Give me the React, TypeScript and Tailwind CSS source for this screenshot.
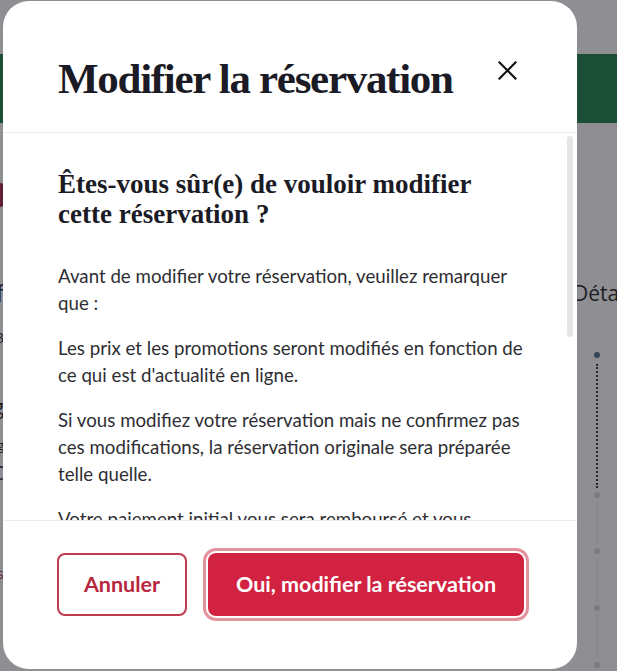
import { useState } from 'react';

const paragraphs = [
  'Avant de modifier votre réservation, veuillez remarquer que :',
  "Les prix et les promotions seront modifiés en fonction de ce qui est d'actualité en ligne.",
  'Si vous modifiez votre réservation mais ne confirmez pas ces modifications, la réservation originale sera préparée telle quelle.',
  'Votre paiement initial vous sera remboursé et vous recevrez une nouvelle facture.',
];

const CloseIcon = () => (
  <svg width="19" height="19" viewBox="0 0 19 19" fill="none" stroke="#111" strokeWidth="2.2" strokeLinecap="square">
    <path d="M1.5 1.5 17.5 17.5" />
    <path d="M17.5 1.5 1.5 17.5" />
  </svg>
);

// page visible behind the overlay
const BackgroundPage = () => (
  <div className="pt-[54px]">
    <div className="h-[69px] bg-[#1a7d45]" />
    <div className="flex">
      {/* bord gauche de la page, presque entièrement caché */}
      <div className="flex w-[4px] shrink-0 flex-col items-end pt-[60px] font-['Open_Sans',sans-serif] text-[#1c1c22]">
        <span className="h-[24px] w-[20px] rounded-[4px] bg-[#a5203c]" />
        <span className="mt-[76px] whitespace-nowrap text-[24px] leading-[20px]">Modif</span>
        <span className="mt-[27px] whitespace-nowrap text-[15px] leading-[14px]">1 2 3</span>
        <span className="mt-[53px] whitespace-nowrap text-[20px] leading-[20px]">Voyag</span>
        <span className="mt-[23px] whitespace-nowrap text-[13px] leading-[10px]">Bg</span>
        <span className="mt-[13px] whitespace-nowrap text-[20px] leading-[20px]">ABC</span>
        <span className="mt-[84px] whitespace-nowrap text-[15px] leading-[13px] text-[#a5203c]">Plus</span>
      </div>
      <div className="ml-[569px] pt-[160px]">
        <h2 className="whitespace-nowrap font-['Open_Sans',sans-serif] text-[21px] leading-[20px] text-[#1c1c22]">Détails</h2>
        <div className="ml-[21px] mt-[49px] flex w-[6px] flex-col items-center">
          <span className="h-[6px] w-[6px] rounded-full bg-[#4f6a82]" />
          <span className="mt-[6px] h-[124px] border-l-2 border-dotted border-[#2b3440]" />
          <span className="mt-[4px] h-[6px] w-[6px] rounded-full bg-[#d6d6d9]" />
          <span className="mt-[4px] h-[42px] border-l border-dotted border-[#d6d6d9]" />
          <span className="mt-[4px] h-[6px] w-[6px] rounded-full bg-[#d6d6d9]" />
          <span className="mt-[4px] h-[43px] border-l border-dotted border-[#d6d6d9]" />
          <span className="mt-[4px] h-[6px] w-[6px] rounded-full bg-[#d6d6d9]" />
          <span className="mt-[4px] h-[43px] border-l border-dotted border-[#d6d6d9]" />
          <span className="mt-[4px] h-[6px] w-[6px] rounded-full bg-[#d6d6d9]" />
        </div>
      </div>
    </div>
  </div>
);

export default function App() {
  const [open, setOpen] = useState(true);

  return (
    <div className="relative h-[671px] w-[617px] overflow-hidden bg-white font-['Lato',sans-serif]">
      <BackgroundPage />

      {open && (
        <>
          <div className="absolute inset-0 bg-[rgba(29,29,39,0.5)]" />

          <div
            role="dialog"
            className="absolute left-[3px] top-[1px] flex h-[668px] w-[574px] flex-col overflow-hidden rounded-[26px] bg-white"
          >
            {/* En-tête */}
            <div className="flex items-start justify-between border-b border-[#ececec] pb-[27px] pl-[55px] pr-[60px] pt-[52px]">
              <h1 className="font-['Liberation_Serif',serif] text-[43px] font-bold leading-[52px] tracking-[-0.03em] text-[#1b1b26]">
                Modifier la réservation
              </h1>
              <button className="mt-[8px]" onClick={() => setOpen(false)} aria-label="Fermer">
                <CloseIcon />
              </button>
            </div>

            {/* Contenu */}
            <div className="relative flex-1 overflow-hidden pl-[55px] pr-[48px] pt-[36px]">
              <h2 className="mb-[34px] font-['Liberation_Serif',serif] text-[27px] font-bold leading-[30px] text-[#1b1b26]">
                Êtes-vous sûr(e) de vouloir modifier cette réservation ?
              </h2>
              {paragraphs.map((p) => (
                <p key={p} className="mb-[18px] text-[18.7px] leading-[27px] text-[#2e2e33]">
                  {p}
                </p>
              ))}
              <span className="absolute right-[4px] top-[3px] h-[201px] w-[6px] rounded-full bg-[#e6e6e6]" />
            </div>

            {/* Boutons */}
            <div className="flex gap-[21px] border-t border-[#ececec] pb-[53px] pl-[54px] pt-[32px]">
              <button className="h-[63px] w-[130px] rounded-[8px] border-2 border-[#c23a50] text-[21.5px] font-bold text-[#b8263d]">
                Annuler
              </button>
              <button className="h-[63px] w-[316px] rounded-[8px] bg-[#d12341] text-[21.5px] font-bold text-white ring-[3px] ring-[#e3939e] ring-offset-2 ring-offset-white">
                Oui, modifier la réservation
              </button>
            </div>
          </div>
        </>
      )}
    </div>
  );
}
